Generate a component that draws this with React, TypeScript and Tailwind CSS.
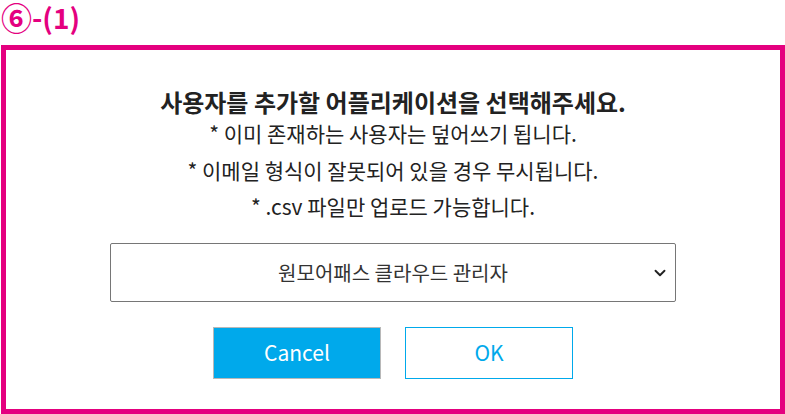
import { FiChevronDown } from "react-icons/fi";

const App = () => {
  return (
    <div
      className="w-[785px] h-[414px] bg-white flex flex-col"
      style={{ fontFamily: '"Noto Sans CJK KR", "Noto Sans", sans-serif' }}
    >
      <div className="h-[45px] pl-[1px] flex items-start text-[#e4007f] font-bold">
        <span className="text-[31px] leading-[34px]">⑥</span>
        <span className="text-[28px] leading-[34px]">-(1)</span>
      </div>
      <div className="ml-[1px] flex-1 border-[5px] border-[#e4007f] flex flex-col items-center pt-[38px] text-[#222]">
        <h2 className="text-[24px] font-bold leading-[28px] text-[#222]">
          사용자를 추가할 어플리케이션을 선택해주세요.
        </h2>
        <p className="mt-[4px] text-[21px] leading-[26px]">* 이미 존재하는 사용자는 덮어쓰기 됩니다.</p>
        <p className="mt-[11px] text-[21px] leading-[26px]">* 이메일 형식이 잘못되어 있을 경우 무시됩니다.</p>
        <p className="mt-[10px] text-[21px] leading-[26px]">* .csv 파일만 업로드 가능합니다.</p>

        <div className="mt-[24px] w-[566px] h-[59px] border border-[#767676] rounded-[2px] flex items-center relative">
          <span className="flex-1 text-center text-[20px] text-[#333]">원모어패스 클라우드 관리자</span>
          <FiChevronDown className="absolute right-[6px] top-[20px] size-[18px] text-[#222]" strokeWidth={2.5} />
        </div>

        <div className="mt-[25px] flex gap-[24px]">
          <button className="w-[168px] h-[52px] bg-[#00a9eb] border border-[#b8b8b8] text-white text-[21px]">
            Cancel
          </button>
          <button className="w-[168px] h-[52px] bg-white border border-[#00a9eb] text-[#00a9eb] text-[21px]">
            OK
          </button>
        </div>
      </div>
    </div>
  );
};

export default App;
